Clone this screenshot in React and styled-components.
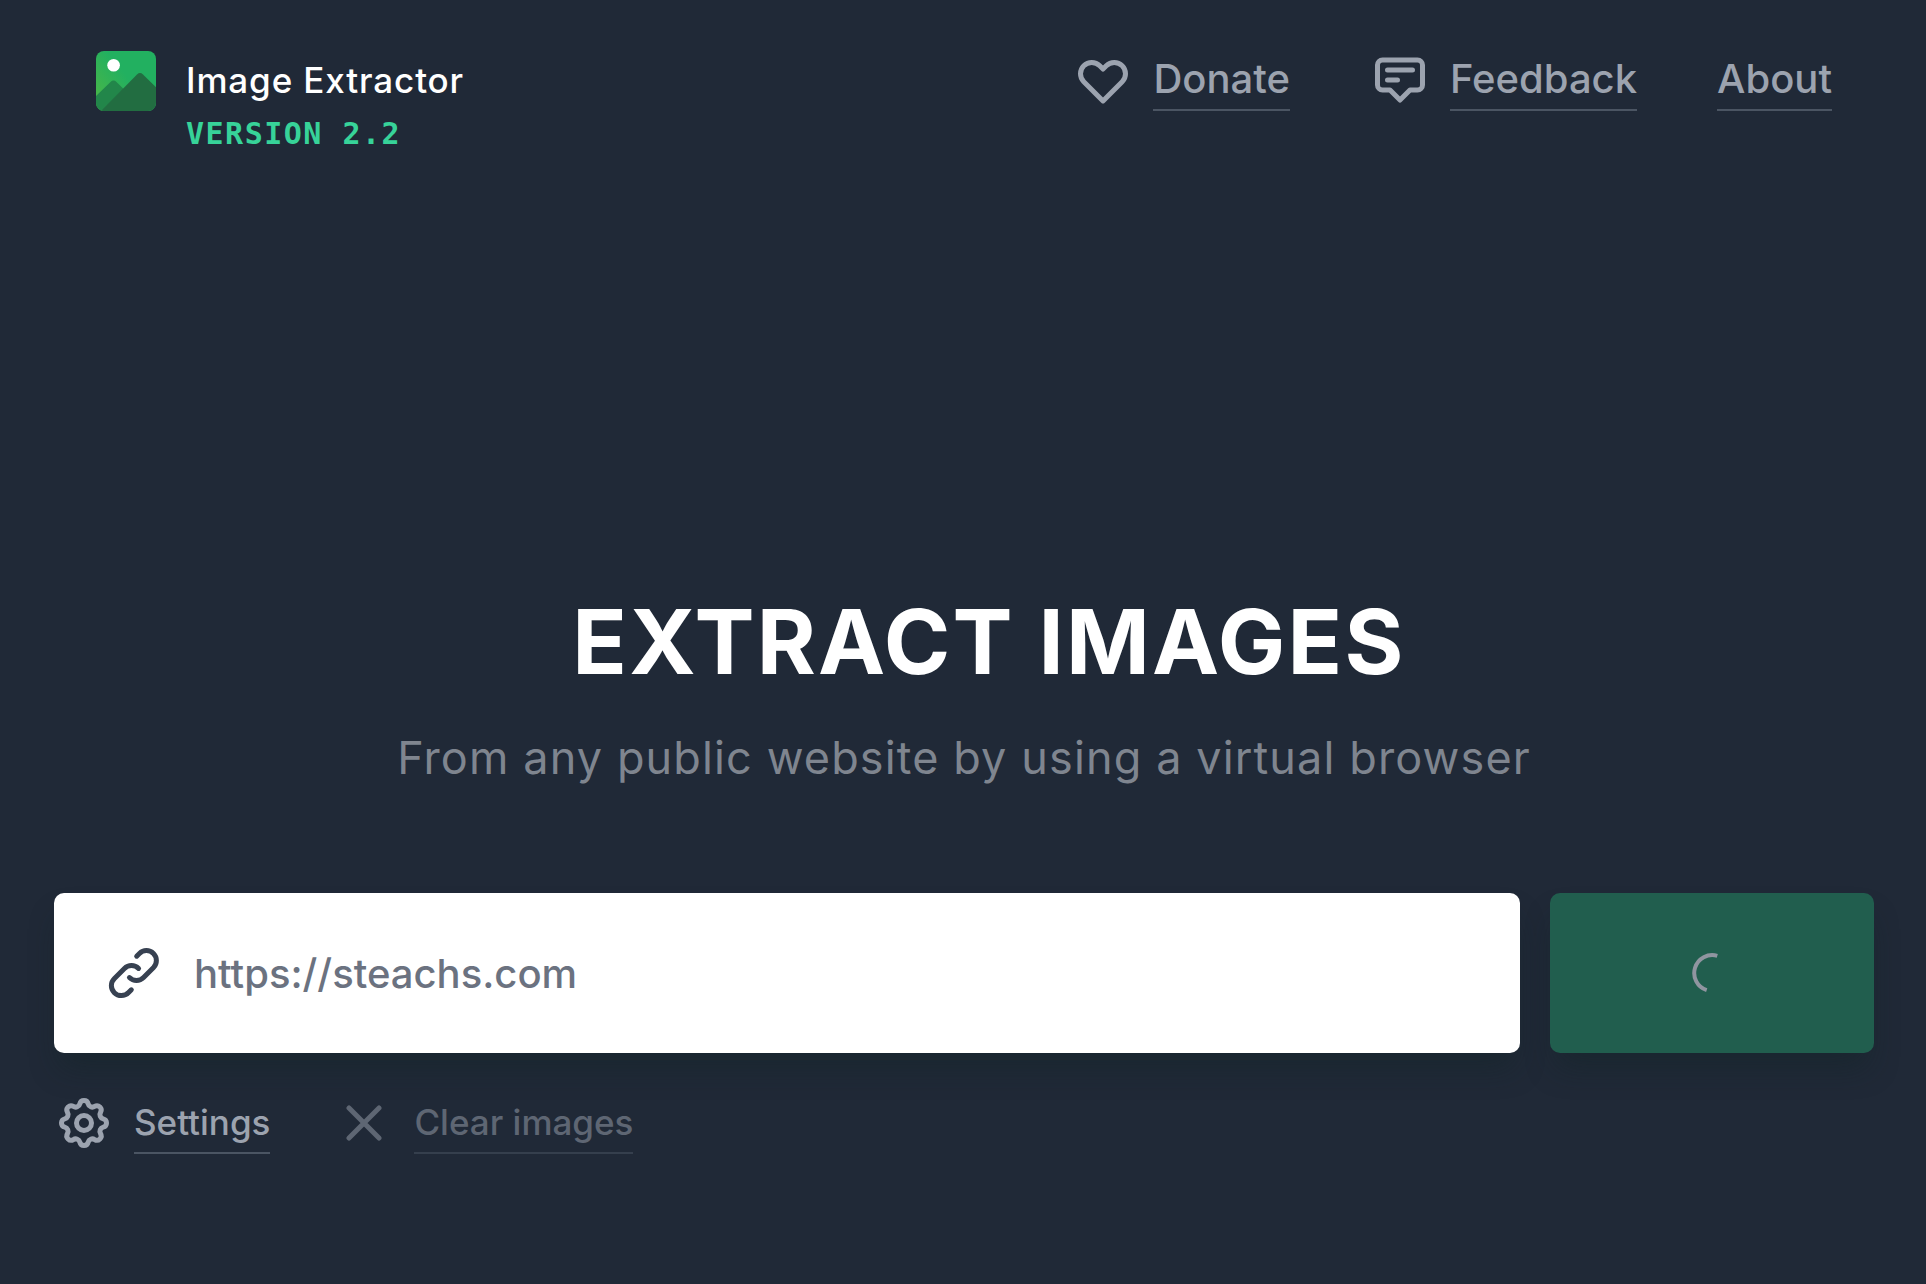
import React from 'react';
import styled, { createGlobalStyle } from 'styled-components';

const GlobalStyle = createGlobalStyle`
  * {
    box-sizing: border-box;
  }

  body {
    margin: 0;
    background: #202937;
    font-family: 'Inter', sans-serif;
    -webkit-font-smoothing: antialiased;
  }
`;

// ICONS
const Icon = ({ children }) => (
  <IconSvg viewBox="0 0 24 24" aria-hidden="true">
    {children}
  </IconSvg>
);

const HeartIcon = () => (
  <Icon>
    <path d="M4.318 6.318a4.5 4.5 0 000 6.364L12 20.364l7.682-7.682a4.5 4.5 0 00-6.364-6.364L12 7.636l-1.318-1.318a4.5 4.5 0 00-6.364 0z" />
  </Icon>
);

const MessageIcon = () => (
  <Icon>
    <path d="M7 8h10M7 12h4m1 8l-4-4H5a2 2 0 01-2-2V6a2 2 0 012-2h14a2 2 0 012 2v8a2 2 0 01-2 2h-3l-4 4z" />
  </Icon>
);

const LinkIcon = () => (
  <Icon>
    <path d="M13.828 10.172a4 4 0 00-5.656 0l-4 4a4 4 0 105.656 5.656l1.102-1.101m-.758-4.899a4 4 0 005.656 0l4-4a4 4 0 00-5.656-5.656l-1.1 1.1" />
  </Icon>
);

const GearIcon = () => (
  <Icon>
    <path d="M10.325 4.317c.426-1.756 2.924-1.756 3.35 0a1.724 1.724 0 002.573 1.066c1.543-.94 3.31.826 2.37 2.37a1.724 1.724 0 001.065 2.572c1.756.426 1.756 2.924 0 3.35a1.724 1.724 0 00-1.066 2.573c.94 1.543-.826 3.31-2.37 2.37a1.724 1.724 0 00-2.572 1.065c-.426 1.756-2.924 1.756-3.35 0a1.724 1.724 0 00-2.573-1.066c-1.543.94-3.31-.826-2.37-2.37a1.724 1.724 0 00-1.065-2.572c-1.756-.426-1.756-2.924 0-3.35a1.724 1.724 0 001.066-2.573c-.94-1.543.826-3.31 2.37-2.37.996.608 2.296.07 2.572-1.065z" />
    <circle cx="12" cy="12" r="3" />
  </Icon>
);

const CloseIcon = () => (
  <Icon>
    <path d="M6 6l12 12M18 6L6 18" />
  </Icon>
);

const Logo = () => (
  <LogoSvg viewBox="0 0 60 60" aria-hidden="true">
    <defs>
      <linearGradient id="sky" x1="0" y1="0.8" x2="0.5" y2="0.4">
        <stop offset="0" stopColor="#48b648" />
        <stop offset="1" stopColor="#22b060" />
      </linearGradient>
      <clipPath id="frame">
        <rect width="60" height="60" rx="8" />
      </clipPath>
    </defs>
    <g clipPath="url(#frame)">
      <rect width="60" height="60" fill="url(#sky)" />
      <circle cx="17.6" cy="14.2" r="6.3" fill="#fff" />
      <path d="M0 45 14.5 30.9q3-2.6 6 0L50 60H0z" fill="#22864a" />
      <path d="M5 60 41 23.4q3-2.6 6 0L60 36.2V60z" fill="#226d41" />
    </g>
  </LogoSvg>
);

const navLinks = [
  { label: 'Donate', icon: <HeartIcon /> },
  { label: 'Feedback', icon: <MessageIcon /> },
  { label: 'About' },
];

const App = () => {
  return (
    <Page>
      <GlobalStyle />
      <Header>
        <Brand>
          <Logo />
          <div>
            <BrandName>Image Extractor</BrandName>
            <Version>VERSION 2.2</Version>
          </div>
        </Brand>
        <Nav>
          {navLinks.map((link) => (
            <NavLink key={link.label} href="#">
              {link.icon}
              <Label>{link.label}</Label>
            </NavLink>
          ))}
        </Nav>
      </Header>
      <Main>
        <Title>EXTRACT IMAGES</Title>
        <Subtitle>From any public website by using a virtual browser</Subtitle>
        <Form onSubmit={(e) => e.preventDefault()}>
          <UrlField>
            <LinkIcon />
            <UrlInput type="text" aria-label="Website address" defaultValue="https://steachs.com" />
          </UrlField>
          <SubmitButton type="submit" aria-label="Extract" disabled>
            <Spinner viewBox="0 0 40 40">
              <path d="M25.3 2.8A18 18 0 0 0 14.7 37.2" />
            </Spinner>
          </SubmitButton>
        </Form>
        <Actions>
          <ActionButton type="button">
            <GearIcon />
            <Label>Settings</Label>
          </ActionButton>
          <ActionButton type="button" disabled>
            <CloseIcon />
            <Label>Clear images</Label>
          </ActionButton>
        </Actions>
      </Main>
    </Page>
  );
};

const Page = styled.div`
  min-height: 100vh;
  padding: 49px 52px 49px 54px;
`;

const IconSvg = styled.svg`
  flex: none;
  width: 60px;
  height: 60px;
  fill: none;
  stroke: currentColor;
  stroke-width: 2;
  stroke-linecap: round;
  stroke-linejoin: round;
`;

const LogoSvg = styled.svg`
  flex: none;
  width: 60px;
  height: 60px;
`;

const Header = styled.header`
  display: flex;
  justify-content: space-between;
  align-items: flex-start;
  padding: 0 42px;
`;

const Brand = styled.div`
  display: flex;
  gap: 30px;
  padding-top: 2px;
`;

const BrandName = styled.div`
  color: #fff;
  font-size: 35px;
  font-weight: 500;
  line-height: 58px;
  letter-spacing: 0.025em;
`;

const Version = styled.div`
  color: #37d399;
  font-family: 'DejaVu Sans Mono', monospace;
  font-size: 30px;
  font-weight: 700;
  line-height: 50px;
  letter-spacing: 0.05em;
`;

const Nav = styled.nav`
  display: flex;
  gap: 80px;
`;

const NavLink = styled.a`
  display: flex;
  align-items: center;
  gap: 20px;
  color: #9ca3af;
  font-size: 40px;
  font-weight: 500;
  line-height: 60px;
  text-decoration: none;
`;

const Label = styled.span`
  border-bottom: 2px solid #4b5563;
`;

const Main = styled.main`
  padding-top: 429px;
`;

const Title = styled.h1`
  margin: 0;
  padding-left: 50px;
  color: #fff;
  font-size: 90px;
  font-weight: 700;
  line-height: 108px;
  letter-spacing: 0.025em;
  text-align: center;
`;

const Subtitle = styled.p`
  margin: 32px 0 0;
  color: #7f858f;
  font-size: 45px;
  line-height: 60px;
  letter-spacing: 0.025em;
  text-align: center;
`;

const Form = styled.form`
  display: flex;
  gap: 30px;
  margin-top: 105px;
`;

const UrlField = styled.div`
  display: flex;
  flex: 1;
  align-items: center;
  gap: 30px;
  height: 160px;
  padding: 0 50px;
  border-radius: 10px;
  background: #fff;
  color: #374151;
  box-shadow: 0 20px 30px -6px rgba(16, 36, 36, 0.4);
`;

const UrlInput = styled.input`
  flex: 1;
  min-width: 0;
  padding: 0;
  border: 0;
  outline: 0;
  background: transparent;
  color: #6b7280;
  font: 500 40px 'Inter', sans-serif;
`;

const SubmitButton = styled.button`
  display: flex;
  align-items: center;
  justify-content: center;
  width: 324px;
  height: 160px;
  border: 0;
  border-radius: 10px;
  background: #215e4e;
  box-shadow: 0 20px 30px -6px rgba(16, 36, 36, 0.4);
`;

const Spinner = styled.svg`
  width: 40px;
  height: 40px;
  fill: none;
  stroke: #9095a0;
  stroke-width: 4;
`;

const Actions = styled.div`
  display: flex;
  gap: 64px;
  margin-top: 39px;
`;

const ActionButton = styled.button`
  display: flex;
  align-items: center;
  gap: 20px;
  padding: 0;
  border: 0;
  background: transparent;
  color: #9ca3af;
  font: 500 35px/60px 'Inter', sans-serif;
  cursor: pointer;

  &:disabled {
    opacity: 0.5;
    cursor: default;
  }
`;

export default App;
